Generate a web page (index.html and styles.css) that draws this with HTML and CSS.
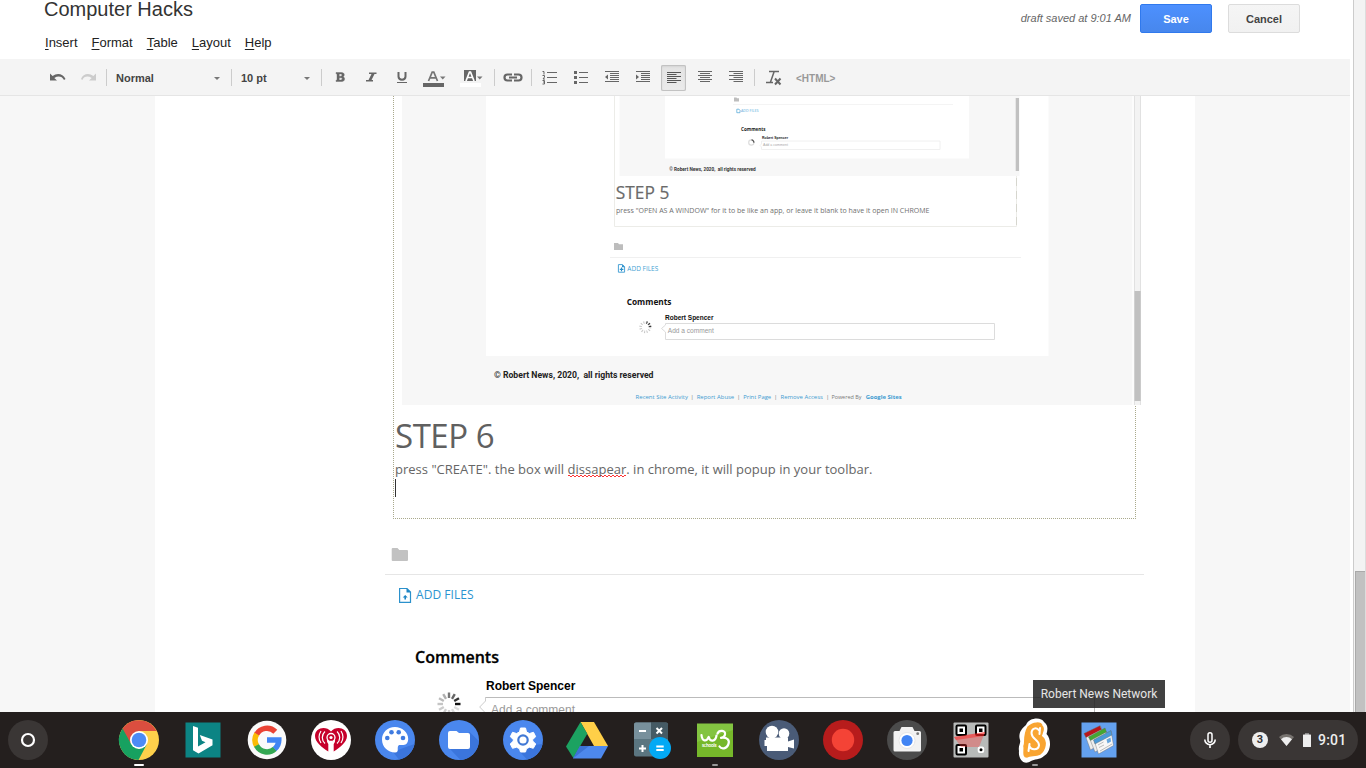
FILE: index.html
```html
<!DOCTYPE html>
<html lang="en">
<head>
<meta charset="utf-8">
<title>Computer Hacks</title>
<link rel="stylesheet" href="styles.css">
</head>
<body>
<main class="window">
  <div class="page">
    <header class="header">
      <div class="heading">
        <h1 class="title">Computer Hacks</h1>
        <nav class="menu"><span><u>I</u>nsert</span><span><u>F</u>ormat</span><span><u>T</u>able</span><span><u>L</u>ayout</span><span><u>H</u>elp</span></nav>
      </div>
      <div class="actions">
        <em class="draft">draft saved at 9:01 AM</em>
        <button class="btn btn-save">Save</button>
        <button class="btn btn-cancel">Cancel</button>
      </div>
    </header>

    <div class="toolbar">
      <svg class="tool" viewBox="0 0 31 36"><path d="M8 14.500V21.500H15L12.300 18.900C16 16.500 20 17 22 21L23.500 20C21 14.500 15 13.500 10.600 17z" fill="#666"/></svg>
      <svg class="tool" viewBox="0 0 31 36"><path d="M23 14.500V21.500H16L18.700 18.900C15 16.500 11 17 9.300 21L8 20C10 14.500 16 13.500 20.400 17z" fill="#ccc"/></svg>
      <i class="sep sep-gap"></i>
      <div class="select select-style">Normal<i class="arrow"></i></div>
      <i class="sep"></i>
      <div class="select select-size">10 pt<i class="arrow"></i></div>
      <i class="sep sep-after"></i>
      <svg class="tool" viewBox="0 0 31 36"><path fill-rule="evenodd" d="M11 13.500H16.500C19.800 13.500 20 17 18 17.800 20.500 18.500 20 22.500 17 22.500H11V21.200H12V14.800H11zM14.200 15V17.200H16C17.300 17.200 17.300 15 16 15zM14.200 18.800V21H16C17.700 21 17.700 18.800 16 18.800z" fill="#666" stroke="#666" stroke-width=".4"/></svg>
      <svg class="tool" viewBox="0 0 31 36"><path d="M13 13.500H20.500V15H18.500L15.500 21H17V22.500H10V21H12.500L15.500 15H13z" fill="#666"/></svg>
      <svg class="tool" viewBox="0 0 31 36"><path d="M11.500 13V17.500C11.500 21.700 18.500 21.700 18.500 17.500V13" fill="none" stroke="#666" stroke-width="2"/><path d="M10 23H20V24H10z" fill="#666"/></svg>
      <svg class="tool" viewBox="0 0 31 36"><path d="M10.500 22L14.200 13.200H15.800L19.500 22M12 18.800H18" fill="none" stroke="#757575" stroke-width="1.700"/><path d="M5 24H26V28H5z" fill="#666"/><path d="M22 17.500H27.500L24.750 20.500z" fill="#777"/></svg>
      <svg class="tool tool-highlight" viewBox="0 0 45 36"><path d="M15 11H27V22H15z" fill="#666"/><path d="M17 22L20.500 13H21.500L25 22M18.500 18.500H23.500" fill="none" stroke="#fff" stroke-width="1.700"/><path d="M11 24H32V28H11z" fill="#fff"/><path d="M28 17.500H33.500L30.750 20.500z" fill="#777"/></svg>
      <i class="sep"></i>
      <svg class="tool tool-link" viewBox="0 0 36 36"><path d="M17 15.500H12.500A3 3 0 0 0 12.500 21.500H17M19 15.500H23.500A3 3 0 0 1 23.500 21.500H19M14 18.500H22" fill="none" stroke="#666" stroke-width="2.200"/></svg>
      <i class="sep sep-wide"></i>
      <svg class="tool" viewBox="0 0 31 36"><path d="M12 13.500H22M12 18.500H22M12 23.500H22" stroke="#666" stroke-width="1.200"/><path d="M7.500 12.500H9V15.500M7.500 16.500H9.500V18L8 20H10M7.500 21.500H9.500V25H7.500M8 23H9.500" fill="none" stroke="#666"/></svg>
      <svg class="tool" viewBox="0 0 31 36"><path d="M13 13.500H22M13 18.500H22M13 23.500H22" stroke="#666" stroke-width="1.200"/><path d="M8 12H11V15H8zM8 17H11V20H8zM8 22H11V25H8z" fill="#666"/></svg>
      <svg class="tool" viewBox="0 0 31 36"><path d="M8 12.500H22M13 14.500H22M13 16.500H22M13 18.500H22M13 20.500H22M8 22.500H22" stroke="#666"/><path d="M11 15.500V20.500L8 18z" fill="#666"/></svg>
      <svg class="tool" viewBox="0 0 31 36"><path d="M8 12.500H22M13 14.500H22M13 16.500H22M13 18.500H22M13 20.500H22M8 22.500H22" stroke="#666"/><path d="M8 15.500V20.500L11 18z" fill="#666"/></svg>
      <span class="tool pressed"><svg viewBox="0 0 25 26"><path d="M6 7.500H20M6 9.500H15.500M6 11.500H20M6 13.500H15.500M6 15.500H20M6 17.500H15.500" stroke="#555"/></svg></span>
      <svg class="tool" viewBox="0 0 31 36"><path d="M8 12.500H22M10 14.500H20M8 16.500H22M10 18.500H20M8 20.500H22M10 22.500H20" stroke="#666"/></svg>
      <svg class="tool" viewBox="0 0 31 36"><path d="M8 12.500H22M12.500 14.500H22M8 16.500H22M12.500 18.500H22M8 20.500H22M12.500 22.500H22" stroke="#666"/></svg>
      <i class="sep sep-gap"></i>
      <svg class="tool tool-clear" viewBox="0 0 37 36"><path d="M14 12.500H24M19 13L15.500 23M11 23.500H18" fill="none" stroke="#666" stroke-width="1.500"/><path d="M20 19.500L25.500 25.500M25.500 19.500L20 25.500" stroke="#666" stroke-width="2"/></svg>
      <span class="html">&lt;HTML&gt;</span>
    </div>

    <div class="canvas">
      <div class="sheet">
        <section class="editor">
          <svg class="picture" viewBox="402 96 739 309" font-family="Open Sans, sans-serif">
            <path d="M402 96H1141V405H402z" fill="#f7f7f7"/>
            <path d="M486 96H1048.500V356H486z" fill="#fff"/>
            <path d="M1132 96H1134V405H1132z" fill="#fcfcfc"/>
            <path d="M1134 96H1141V405H1134z" fill="#e1e1e1"/><path d="M1135 96H1140V405H1135z" fill="#f3f3f3"/>
            <path d="M1134.500 291H1140.700V401H1134.500z" fill="#c1c1c1"/>
            <g>
              <path d="M614.500 96V226.500H1016.500V176" fill="none" stroke="#ecece8"/>
              <path d="M1016.500 178V226" stroke="#d6d6ce" stroke-dasharray="8 5"/>
              <path d="M619.500 96H1019.500V176H619.500z" fill="#f7f7f7"/>
              <path d="M665 96H969V158.500H665z" fill="#fff"/>
              <path d="M1015.700 98H1019V171H1015.700z" fill="#c1c1c1"/>
              <path d="M734 97.500H736.500L737 98.300H739V101.500H734z" fill="#bdbdbd"/>
              <path d="M733 104.500H953" stroke="#f4f4f4"/>
              <path d="M736.800 109.200H739L740 110.200V112.700H736.800z" fill="none" stroke="#4aa3d6" stroke-width=".7"/>
              <text x="741" y="112.300" font-size="4" fill="#58aadb" textLength="17.500" lengthAdjust="spacingAndGlyphs">ADD FILES</text>
              <text x="741" y="131" font-size="5" font-weight="700" fill="#222" textLength="24.500" lengthAdjust="spacingAndGlyphs">Comments</text>
              <text x="762" y="138.700" font-family="Liberation Sans, sans-serif" font-size="4" font-weight="700" fill="#222" textLength="26" lengthAdjust="spacingAndGlyphs">Robert Spencer</text>
              <path d="M761.500 141H940V149.500H761.500V147L760 145.500L761.500 144z" fill="#fff" stroke="#ececec" stroke-width=".8"/>
              <text x="763" y="145.800" font-family="Liberation Sans, sans-serif" font-size="3.800" fill="#aaa" textLength="25" lengthAdjust="spacingAndGlyphs">Add a comment</text>
              <circle cx="751.300" cy="142.500" r="2.600" fill="none" stroke="#ddd" stroke-width="1.200"/><path d="M751.500 139.900A2.600 2.600 0 0 1 753.900 142.700" fill="none" stroke="#555" stroke-width="1.200"/>
              <text x="669.200" y="170.700" font-family="Roboto, sans-serif" font-size="5" font-weight="700" fill="#333" textLength="86.500" lengthAdjust="spacingAndGlyphs" xml:space="preserve">© Robert News, 2020,  all rights reserved</text>
              <text x="615.800" y="199" font-size="18" fill="#6a6a6a" stroke="#6a6a6a" stroke-width=".2" textLength="53.500" lengthAdjust="spacingAndGlyphs">STEP 5</text>
              <text x="616" y="213.300" font-size="7" fill="#6f6f6f" textLength="313.500" lengthAdjust="spacingAndGlyphs">press "OPEN AS A WINDOW" for it to be like an app, or leave it blank to have it open IN CHROME</text>
            </g>
            <path d="M614 243H618L619 244.200H623V250H614z" fill="#bdbdbd"/>
            <path d="M610 257.500H1021" stroke="#f0f0f0"/>
            <path d="M618.400 264.600H622.500L624.600 266.700V272.200H618.400z" fill="none" stroke="#4aa3d6"/><path d="M621.500 267.500V271.300M619.800 269.400H623.400" stroke="#2b8fca" stroke-width="1.100"/><path d="M622 264.500V267.300H625z" fill="#2b8fca"/>
            <text x="627.300" y="270.600" font-size="6.700" fill="#3f9fd3" textLength="31" lengthAdjust="spacingAndGlyphs">ADD FILES</text>
            <text x="626.700" y="304.800" font-size="8.900" font-weight="700" fill="#111" textLength="44.800" lengthAdjust="spacingAndGlyphs">Comments</text>
            <text x="665" y="319.600" font-family="Liberation Sans, sans-serif" font-size="6.500" font-weight="700" fill="#111" textLength="48.500" lengthAdjust="spacingAndGlyphs">Robert Spencer</text>
            <path d="M665.500 323.500H994.500V339.500H665.500V332L661.500 328.500L665.500 325z" fill="#fff" stroke="#dcdcdc"/>
            <text x="667.800" y="332.500" font-family="Liberation Sans, sans-serif" font-size="6.500" fill="#999" textLength="46" lengthAdjust="spacingAndGlyphs">Add a comment</text>
            <circle cx="645.300" cy="327.200" r="4.700" fill="none" stroke="#c8c8c8" stroke-width="2.600" stroke-dasharray="1 1.460"/>
            <path d="M646.500 322.600A4.700 4.700 0 0 1 650 328" fill="none" stroke="#333" stroke-width="2.600" stroke-dasharray="1 1.460"/>
            <text x="494" y="378.300" font-family="Roboto, sans-serif" font-size="8.700" font-weight="700" fill="#222" textLength="159.500" lengthAdjust="spacingAndGlyphs" xml:space="preserve">© Robert News, 2020,  all rights reserved</text>
            <g font-size="6" fill="#3d9bd1">
              <text x="635.600" y="399.200" textLength="52.300" lengthAdjust="spacingAndGlyphs">Recent Site Activity</text>
              <text x="696.700" y="399.200" textLength="37.500" lengthAdjust="spacingAndGlyphs">Report Abuse</text>
              <text x="743.200" y="399.200" textLength="28" lengthAdjust="spacingAndGlyphs">Print Page</text>
              <text x="780.500" y="399.200" textLength="42.300" lengthAdjust="spacingAndGlyphs">Remove Access</text>
              <text x="865.700" y="399.200" font-weight="700" textLength="36" lengthAdjust="spacingAndGlyphs">Google Sites</text>
              <text x="831.400" y="399.200" fill="#777" textLength="30" lengthAdjust="spacingAndGlyphs">Powered By</text>
              <g fill="#777"><text x="690.500" y="399.200">|</text><text x="737" y="399.200">|</text><text x="774" y="399.200">|</text><text x="826" y="399.200">|</text></g>
            </g>
          </svg>
          <h2 class="step">STEP 6</h2>
          <p class="para">press "CREATE". the box will <span class="misspelt">dissapear</span>. in chrome, it will popup in your toolbar.</p>
          <div class="caret"></div>
        </section>
        <section class="files">
          <div class="folder"><svg width="18" height="14" viewBox="0 0 18 14"><path d="M.7 1Q.7 0 1.700 0H6.500L8.300 2H16Q17 2 17 3V12Q17 13 16 13H1.700Q.7 13 .7 12z" fill="#c2c2c2"/></svg></div>
          <div class="add"><svg width="14" height="16" viewBox="0 0 14 16"><path d="M.6 1.500H8L11.500 5V15.400H.6z" fill="none" stroke="#2b91cc" stroke-width="1.200"/><path d="M7.500 1V5.500H12zM6.200 8L8.700 10.500H7V12.500H5.400V10.500H3.700z" fill="#1e86c5"/></svg><span>ADD FILES</span></div>
        </section>
        <section class="comments">
          <h3 class="comments-title">Comments</h3>
          <div class="comment-row">
            <svg class="spinner" viewBox="-12 -12 24 24" stroke-width="2.400"><path d="M0-6V-11.500" stroke="#777"/><path d="M0-6V-11.500" transform="rotate(30)" stroke="#666"/><path d="M0-6V-11.500" transform="rotate(60)" stroke="#333"/><path d="M0-6V-11.500" transform="rotate(90)" stroke="#111"/><path d="M0-6V-11.500" transform="rotate(120)" stroke="#ddd"/><path d="M0-6V-11.500" transform="rotate(150)" stroke="#ddd"/><path d="M0-6V-11.500" transform="rotate(180)" stroke="#d5d5d5"/><path d="M0-6V-11.500" transform="rotate(210)" stroke="#d0d0d0"/><path d="M0-6V-11.500" transform="rotate(240)" stroke="#ccc"/><path d="M0-6V-11.500" transform="rotate(270)" stroke="#c5c5c5"/><path d="M0-6V-11.500" transform="rotate(300)" stroke="#bbb"/><path d="M0-6V-11.500" transform="rotate(330)" stroke="#b0b0b0"/></svg>
            <svg class="notch" viewBox="0 0 7 30"><path d="M6.500 0V4L.7 10L6.500 16V30" fill="none" stroke="#ccc"/></svg>
            <div class="comment-body">
              <strong>Robert Spencer</strong>
              <div class="comment-box">Add a comment</div>
            </div>
          </div>
        </section>
      </div>
    </div>
  </div>
  <div class="scrollbar"><div class="thumb"></div></div>
</main>

<div class="tooltip">Robert News Network</div>

<footer class="shelf">
  <svg class="launcher" viewBox="0 0 40 40"><circle cx="20" cy="20" r="20" fill="#3a3635"/><circle cx="20" cy="20" r="6" fill="none" stroke="#fff" stroke-width="2.200"/></svg>
  <div class="apps">
    <div class="app active"><svg viewBox="0 0 40 40"><circle cx="20" cy="20" r="20" fill="#fdd04b"/><path d="M2.700 10A20 20 0 0 1 37.700 11H20L12 24z" fill="#db4e3f"/><path d="M3.600 8.500L12.300 24.300L20 29L27.700 24.500L19.500 40A20 20 0 0 1 3.600 8.500z" fill="#17a160"/><circle cx="20" cy="20" r="9" fill="#fff"/><circle cx="20" cy="20" r="7.300" fill="#4c8bf5"/></svg></div>
    <div class="app"><svg viewBox="0 0 40 40"><path d="M2.500 2.500H37.500V37.500H2.500z" fill="#0c8484"/><path d="M10 6L15 7.800V26.500L22.500 22.300L19 20.700L16.800 15L29.500 19.500V25.200L15.500 33.500L10 30.300z" fill="#fff"/></svg></div>
    <div class="app"><svg viewBox="0 0 40 40"><circle cx="20" cy="20" r="19.300" fill="#fafafa"/><g fill="none" stroke-width="5.500"><path d="M28.300 11.700A11.800 11.800 0 0 0 9.500 14.500" stroke="#ea4335"/><path d="M9.700 14A11.800 11.800 0 0 0 9.700 26" stroke="#fbbc05"/><path d="M9.500 25.500A11.800 11.800 0 0 0 28 28.700" stroke="#34a853"/><path d="M20 20H31.800A11.800 11.800 0 0 1 27.600 29" stroke="#4285f4"/></g></svg></div>
    <div class="app"><svg viewBox="0 0 40 40"><circle cx="20" cy="20" r="20" fill="#fff"/><path d="M17.300 31.500V24A5.500 5.500 0 0 1 20 15A5.500 5.500 0 0 1 22.700 24V31.500C29 27.500 36 22 36 16C36 7.500 25 5.500 20 11.500C15 5.500 4 7.500 4 16C4 22 11 27.500 17.300 31.500z" fill="#c6002b"/><circle cx="20" cy="17.500" r="4" fill="#c6002b" stroke="#fff" stroke-width="1.300"/><circle cx="20" cy="17.500" r="1.600" fill="#fff"/><path d="M14 11.500A8 8 0 0 0 14 23.500M26 11.500A8 8 0 0 1 26 23.500M10 11A11 11 0 0 0 10 23M30 11A11 11 0 0 1 30 23" fill="none" stroke="#fff" stroke-width="1.200"/></svg></div>
    <div class="app"><svg viewBox="0 0 40 40"><circle cx="20" cy="20" r="20" fill="#4a87ee"/><path d="M31 27L39.500 24A20 20 0 0 1 24 39.600L18 32z" fill="#3b75dc"/><path d="M20 7C12 7 7 13 7 19.500C7 27 13 32.500 20 32.500C25 32.500 21 27 24 25H28.500C31.500 25 33.200 22 33.200 19C33.200 12 27 7 20 7z" fill="#fff"/><g fill="#3f7be0"><circle cx="12.300" cy="18" r="2.300"/><circle cx="16.500" cy="12.300" r="2.300"/><circle cx="23.700" cy="12.300" r="2.300"/><circle cx="28" cy="18" r="2.300"/></g></svg></div>
    <div class="app"><svg viewBox="0 0 40 40"><circle cx="20" cy="20" r="20" fill="#4a87ee"/><path d="M30.500 12L39.800 21A20 20 0 0 1 21.500 40L11 29z" fill="#3b75dc"/><path d="M9 13Q9 11 11 11H17.500L20 13H29Q31 13 31 15V27Q31 29 29 29H11Q9 29 9 27z" fill="#fff"/></svg></div>
    <div class="app"><svg viewBox="0 0 40 40"><circle cx="20" cy="20" r="20" fill="#4a87ee"/><path d="M31 25L39.500 24A20 20 0 0 1 24 39.600L17 32z" fill="#3b75dc"/><path d="M17.500 8H22.500L23.500 12L26.500 13.500L30.500 12.300L32.700 16.700L29.700 19.500V21L32.700 24L30.300 28.300L26.500 27.200L23.500 28.700L22.500 32H17.500L16.500 28.700L13.500 27.200L9.500 28.300L7.300 24L10.300 21V19.500L7.300 16.700L9.500 12.300L13.500 13.500L16.500 12z" fill="#fff" stroke="#fff" stroke-linejoin="round"/><circle cx="20" cy="20" r="4.700" fill="#fff" stroke="#4279d5" stroke-width="2.200"/></svg></div>
    <div class="app"><svg viewBox="0 0 40 40"><path d="M13.500 2H27L41 26H27z" fill="#ffcf48"/><path d="M13.500 2L20.300 13.700L6.300 38L-1 26.500z" fill="#1ca261"/><path d="M13 26H41L34 38.500H6z" fill="#4d88ed"/><path d="M13 26L6 38.500L22 26z" fill="#3c72d5"/></svg></div>
    <div class="app"><svg viewBox="0 0 40 40"><rect x="3" y="2.500" width="34" height="34" rx="2" fill="#5b7580"/><path d="M3 4.500Q3 2.500 5 2.500H20V19H3z" fill="#78909c"/><path d="M20 2.500H35Q37 2.500 37 4.500V19H20z" fill="#455a64"/><path d="M8 11H15M8 28.500H15M11.500 25V32M25.500 8L31 13.500M31 8L25.500 13.500" stroke="#fff" stroke-width="2"/><circle cx="29" cy="28" r="11" fill="#03a9f4"/><path d="M25.300 26.500H32.700M25.300 30H32.700" stroke="#fff" stroke-width="2"/></svg></div>
    <div class="app running"><svg viewBox="0 0 40 40"><path d="M2 3.500H38V37H2z" fill="#83c441"/><path d="M2 22L38 10V37H2z" fill="#76b82a"/><path d="M6.500 15C7 21.500 11.500 22 13.700 17C15 22 20.500 22 21.500 15.500M22.500 13.500C24 9.500 31 10 30 14.500C29.500 17.500 26 17.800 26 17.800C32.500 17 35 20.500 33.300 24.500C31.500 29 26.500 29.500 24.500 26.500" fill="none" stroke="#fff" stroke-width="2.200" stroke-linecap="round" stroke-linejoin="round"/><text x="7" y="26.800" font-family="Lato, sans-serif" font-size="4.800" font-weight="700" fill="#fff" textLength="14.500">schools</text></svg></div>
    <div class="app"><svg viewBox="0 0 40 40"><circle cx="20" cy="20" r="20" fill="#4a5b77"/><g fill="#fff"><circle cx="13" cy="12" r="6.300"/><circle cx="25" cy="13.500" r="5.300"/><path d="M7 17.500H29V21.500L35 19.500V28.500L29 27V31H8V26H5.500V20H7z"/></g></svg></div>
    <div class="app"><svg viewBox="0 0 40 40"><circle cx="20" cy="20" r="20" fill="#b71c1c"/><circle cx="20" cy="20" r="11.200" fill="#f44336"/></svg></div>
    <div class="app"><svg viewBox="0 0 40 40"><circle cx="20" cy="20" r="20" fill="#4b4b4b"/><path d="M6.500 12.500Q6.500 11 8 11H12.500L14.500 7H25.500L27.500 11H32.500Q34 11 34 12.500V30Q34 31.500 32.500 31.500H8Q6.500 31.500 6.500 30z" fill="#f2f2f2"/><circle cx="20" cy="20.500" r="8" fill="#fff" stroke="#dedede" stroke-width=".7"/><circle cx="20" cy="20.500" r="5.600" fill="#4285f4"/><circle cx="30.700" cy="13.700" r="1.400" fill="#777"/></svg></div>
    <div class="app"><svg viewBox="0 0 40 40"><rect x="2.500" y="2.500" width="35" height="35" rx="1" fill="#b8bab9"/><g fill="#fff" stroke="#000" stroke-width="2"><rect x="5.500" y="5.500" width="9.500" height="9.500" rx="1"/><rect x="25" y="5.500" width="9.500" height="9.500" rx="1"/><rect x="5.500" y="25" width="9.500" height="9.500" rx="1"/></g><path d="M8.500 8.500H12V12H8.500zM28 8.500H31.500V12H28zM8.500 28H12V31.500H8.500z"/><rect x="26.700" y="26.500" width="6.500" height="6.500" rx="2" fill="#fff"/><circle cx="30" cy="29.700" r="1.500"/><path d="M3 17L34 12L28 27H10z" fill="#f33" opacity=".35"/><path d="M3 17L34 12L33 16L5 20z" fill="#f22" opacity=".45"/></svg></div>
    <div class="app running"><svg viewBox="0 0 40 40"><path d="M11 5C14-3 27-3 29 2C33 5 33 9 31.500 14C37 20 36 32 29 36C25 40 19 39 16 41C9 46 3 39 4 31C3 25 6 24 5 20C3 14 6 9 11 5z" fill="#fff"/><path d="M13 7C18 2 26 2 27 6C30 9 27 13 26 16C33 21 30 30 25 34C20 36 15 35 12 37C7 37 10 30 9 26C11 22 8 16 13 7z" fill="#f9a532" stroke="#f9a532" stroke-width="1.500"/><path d="M25 8L24.500 14M24.500 11C21 6 16.500 9 16.500 13C16.500 19.500 24.500 19.500 24 25.500C23 31 15.500 30 14.500 26M14.500 24L13.500 31" fill="none" stroke="#fff" stroke-width="2" stroke-linecap="round"/></svg></div>
    <div class="app"><svg viewBox="0 0 40 40"><path d="M2.500 2.500H37.500V37.500H2.500z" fill="#64a1ef"/><g stroke="#666" stroke-width=".4" stroke-linejoin="round"><path d="M5.500 13.500L21.500 6L26 21L11.500 30z" fill="#eee"/><path d="M5 13.500L21 5.700L22.500 9.500L7 17.500z" fill="#b9151b"/><path d="M10 17L26 8.500L30 24L16 32z" fill="#eee"/><path d="M9.500 17L26 8L27.500 12L11.500 20.500z" fill="#43a832"/><path d="M15 20L32 11L34.500 25.500L19.500 34z" fill="#f7f7f7"/><path d="M14.500 20L32 10.500L33 15L16 24z" fill="#4a9ad8"/></g><path d="M19 25L24.500 22M20 27.500L25 25M21 31L33 24" stroke="#bbb"/><path d="M27.500 19.500L31.500 17.500L32 21.500L28.500 23.500z" fill="#68a6dc"/></svg></div>
  </div>
  <svg class="mic" viewBox="0 0 40 40"><circle cx="20" cy="20" r="20" fill="#3a3635"/><rect x="18" y="12.700" width="4" height="9.500" rx="2" fill="none" stroke="#fff" stroke-width="1.500"/><path d="M14.800 19.500A5.200 5.200 0 0 0 25.200 19.500M20 24.800V28" fill="none" stroke="#fff" stroke-width="1.600"/></svg>
  <div class="tray">
    <span class="badge">3</span>
    <svg class="wifi" width="15" height="14" viewBox="0 0 15 14"><path d="M0 4A11 11 0 0 1 15 4L7.500 13z" fill="#77736f"/><path d="M2 6.200A8 8 0 0 1 13 6.200L7.500 13z" fill="#eee"/></svg>
    <svg class="battery" width="8" height="14" viewBox="0 0 8 14"><path d="M2 0H6V2H2z" fill="#888"/><path d="M0 2Q0 1.500.5 1.500H7.500Q8 1.500 8 2V13.500Q8 14 7.500 14H.5Q0 14 0 13.500z" fill="#eee"/></svg>
    <span class="clock">9:01</span>
  </div>
</footer>
</body>
</html>
```
FILE: styles.css
```css
* { box-sizing: border-box; }
body { margin: 0; width: 1366px; height: 768px; overflow: hidden; display: flex; flex-direction: column; position: relative; background: #fff; font-family: "Liberation Sans", Arial, sans-serif; }
h1, h2, h3, p { margin: 0; font-weight: 400; }
svg { display: block; flex: none; }

.window { display: flex; justify-content: space-between; height: 712px; overflow: hidden; }
.page { width: 1350px; display: flex; flex-direction: column; }

.header { height: 59px; flex: none; display: flex; justify-content: space-between; padding: 0 50px 0 44px; }
.title { font-size: 20px; line-height: 18px; color: #333; }
.menu { display: flex; gap: 14px; padding-left: 1px; margin-top: 16px; font-size: 13px; line-height: 18px; color: #222; }
.menu u { text-underline-offset: 2px; }
.actions { display: flex; align-items: center; height: 29px; margin-top: 4px; }
.draft { position: relative; top: -1px; font-size: 11px; color: #666; margin-right: 9px; }
.btn { width: 72px; height: 29px; padding: 0; border-radius: 2px; font: bold 11px "Liberation Sans", Arial, sans-serif; }
.btn-save { color: #fff; border: 1px solid #3079ed; background: linear-gradient(#4d90fe, #4787ed); }
.btn-cancel { margin-left: 16px; color: #444; border: 1px solid #dcdcdc; background: linear-gradient(#f5f5f5, #f1f1f1); }

.toolbar { height: 37px; flex: none; display: flex; align-items: center; padding-left: 42px; background: #f4f4f4; border-bottom: 1px solid #e5e5e5; }
.tool { width: 31px; height: 36px; flex: none; }
.tool-highlight { width: 45px; }
.tool-link { width: 36px; }
.tool-clear { width: 37px; }
.pressed { display: flex; align-items: center; padding-left: 2px; }
.pressed svg { width: 25px; height: 26px; margin-top: 1px; border-radius: 2px; background: linear-gradient(#e3e3e3, #ebebeb); box-shadow: inset 0 0 0 1px #c2c2c2, inset 0 1px 2px 1px #d4d4d4; }
.sep { width: 1px; height: 17px; flex: none; background: #ccc; }
.sep-gap { margin-left: 2px; }
.sep-after { margin-right: 3px; }
.sep-wide { margin-right: 3px; }
.select { display: flex; align-items: center; justify-content: space-between; padding: 2px 11px 0 9px; font-size: 11px; font-weight: 700; color: #444; }
.select-style { width: 124px; }
.select-size { width: 89px; }
.arrow { border: 3px solid transparent; border-top-color: #777; border-bottom: 0; }
.html { margin: 2px 0 0 4px; font-size: 10px; font-weight: 700; color: #999; }

.canvas { flex: 1; overflow: hidden; background: #f7f7f7; padding-left: 155px; }
.sheet { width: 1040px; height: 640px; background: #fff; }
.editor { width: 743px; height: 423px; margin-left: 238px; border: 1px dotted #a9a98c; border-top: 0; }
.picture { width: 739px; height: 309px; margin-left: 8px; position: relative; }
.step { font: 33px/45px "Open Sans", sans-serif; letter-spacing: -.45px; color: #606060; padding: 8px 0 0 1px; }
.para { font: 13px/18px "Open Sans", sans-serif; color: #666; margin-top: 2px; padding-left: 1px; white-space: nowrap; letter-spacing: .015px; }
.misspelt {
  background:
    repeating-linear-gradient(90deg, #f33 0 2px, transparent 2px 4px) 0 15px / 100% 1px no-repeat,
    repeating-linear-gradient(90deg, transparent 0 2px, #f33 2px 4px) 0 16px / 100% 1px no-repeat;
}
.caret { width: 1px; height: 18px; margin: 1px 0 0 1px; background: #333; }

.files { margin-left: 230px; width: 759px; }
.folder { height: 56px; padding: 29px 0 0 6px; border-bottom: 1px solid #e6e6e6; }
.add { display: flex; align-items: center; height: 40px; padding-left: 14px; gap: 3px; font: 12px/16px "Open Sans", sans-serif; color: #2b94d0; letter-spacing: .05px; }

.comments { margin-left: 260px; padding-top: 31px; }
.comments-title { font: 600 16px/22px "Open Sans", sans-serif; color: #000; -webkit-text-stroke: .3px #000; }
.comment-row { display: flex; margin-top: 11px; }
.spinner { width: 24px; height: 24px; margin: 13px 0 0 22px; }
.notch { width: 7px; height: 30px; margin: 18px 0 0 18px; }
.comment-body { width: 609px; font-size: 12px; line-height: 14px; color: #000; }
.comment-body strong { display: block; }
.comment-box { height: 50px; margin-top: 4px; padding: 5px 0 0 5px; border-top: 1px solid #bbb; border-right: 1px solid #bbb; color: #999; }

.scrollbar { width: 13px; padding-top: 571px; background: #f3f3f3; border-left: 1px solid #ccc; border-right: 1px solid #ddd; }
.thumb { margin-left: 1px; height: 150px; background: #c1c1c1; border: 1px solid #aaa; border-width: 1px 0 0 1px; }

.tooltip { position: absolute; left: 1033px; top: 680px; width: 132px; height: 28px; background: rgba(32, 32, 32, .85); color: #e6e6e6; font: 12px/28px Roboto, sans-serif; text-align: center; white-space: nowrap; }

.shelf { height: 56px; display: flex; align-items: center; padding: 0 8px; background: #241f1e; }
.launcher, .mic { width: 40px; height: 40px; }
.apps { display: flex; margin-left: 59px; }
.app { width: 64px; height: 56px; padding: 8px 12px 0; display: flex; flex-direction: column; align-items: center; }
.app svg { width: 40px; height: 40px; overflow: visible; }
.active::after, .running::after { content: ""; margin-top: 4px; width: 10px; height: 2px; flex: none; border-radius: 1px; background: #fff; }
.running::after { width: 6px; background: #999; }
.mic { margin-left: 59px; }
.tray { width: 120px; height: 40px; margin-left: 8px; padding-left: 14px; display: flex; align-items: center; border-radius: 20px; background: #3a3635; }
.badge { width: 16px; height: 16px; border-radius: 50%; background: #eee; color: #333; font: 700 11px/16px Roboto, sans-serif; text-align: center; }
.wifi { margin-left: 11px; }
.battery { margin-left: 9px; }
.clock { margin-left: 7px; font: 500 14px/20px Roboto, sans-serif; color: #eee; letter-spacing: .2px; }
```
